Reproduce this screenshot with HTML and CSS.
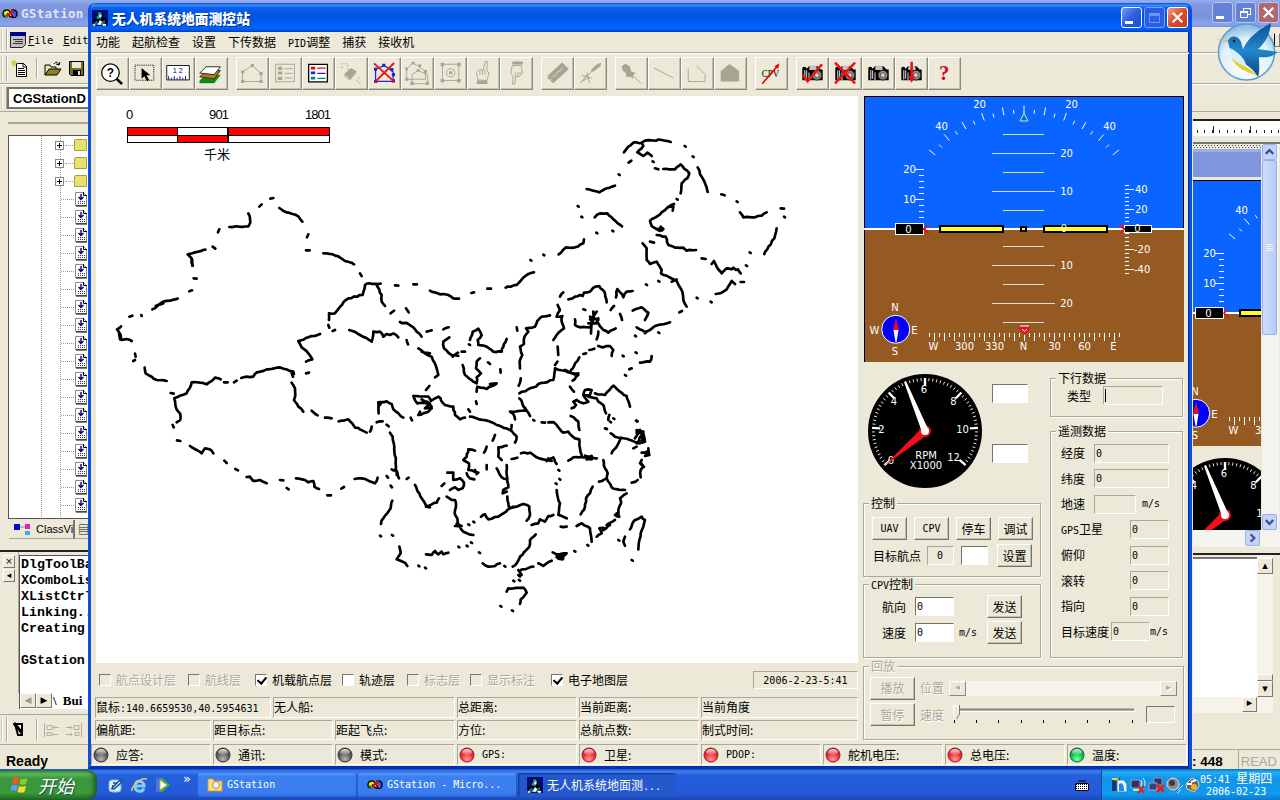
FILE: index.html
```html
<!DOCTYPE html>
<html lang="zh-CN">
<head>
<meta charset="utf-8">
<title>无人机系统地面测控站</title>
<link rel="stylesheet" href="styles.css">
</head>
<body>
<svg width="0" height="0" class="defs">
  <defs>
    <radialGradient id="gGray" cx=".5" cy=".8" r=".8"><stop offset="0" stop-color="#b8b8b8"/><stop offset=".5" stop-color="#666"/><stop offset="1" stop-color="#3c3c3c"/></radialGradient>
    <radialGradient id="gRed" cx=".5" cy=".8" r=".8"><stop offset="0" stop-color="#ff9a9a"/><stop offset=".5" stop-color="#f5333f"/><stop offset="1" stop-color="#a81520"/></radialGradient>
    <radialGradient id="gGreen" cx=".5" cy=".8" r=".8"><stop offset="0" stop-color="#8dff9d"/><stop offset=".5" stop-color="#08cf4d"/><stop offset="1" stop-color="#087a32"/></radialGradient>
    <linearGradient id="gShine" x2="0" y2="1"><stop offset="0" stop-color="#fff" stop-opacity=".85"/><stop offset="1" stop-color="#fff" stop-opacity=".1"/></linearGradient>
    <radialGradient id="gBall" cx=".5" cy=".75" r=".7"><stop offset="0" stop-color="#fff"/><stop offset=".7" stop-color="#dcf0fa"/><stop offset="1" stop-color="#8fbfe2"/></radialGradient>
    <linearGradient id="gWing" x2="0" y2="1"><stop offset="0" stop-color="#0a4f9c"/><stop offset=".5" stop-color="#2487cc"/><stop offset="1" stop-color="#0a4688"/></linearGradient>
  </defs>
  <symbol id="ledGray" viewBox="0 0 16 16"><circle cx="8" cy="8" r="7" fill="url(#gGray)" stroke="#333"/><ellipse cx="8" cy="5" rx="5" ry="3" fill="url(#gShine)"/></symbol>
  <symbol id="ledRed" viewBox="0 0 16 16"><circle cx="8" cy="8" r="7" fill="url(#gRed)" stroke="#8d2026"/><ellipse cx="8" cy="5" rx="5" ry="3" fill="url(#gShine)"/></symbol>
  <symbol id="ledGreen" viewBox="0 0 16 16"><circle cx="8" cy="8" r="7" fill="url(#gGreen)" stroke="#0a6a30"/><ellipse cx="8" cy="5" rx="5" ry="3" fill="url(#gShine)"/></symbol>
  <symbol id="mfc" viewBox="0 0 48 48"><path d="M0 0h48v48H0z" fill="#000d78"/><path d="M16 4h12v10h6v14H12V16h4z" fill="#000"/><path d="M18 7h9l3 9-4 10H15l-2-6 6-4z" fill="#1f9aa0"/><path d="M22 14h6v8h-6z" fill="#e8ffff"/><circle cx="12" cy="36" r="9" fill="#000"/><circle cx="34" cy="35" r="10" fill="#000"/><path d="M2 44c4-7 8-10 14-12l4 12zM22 46l8-12 10-4-2 14z" fill="#156e72"/><path d="M16 44l8-14 6 5-3 9zM32 42h10v5H32zM2 43h8v4H2z" fill="#fff"/></symbol>
  <symbol id="vc" viewBox="0 0 48 36"><path d="M14 6c9-3 12 12 20 20-8 6-12-2-17-8C13 30 3 28 3 18S8 6 14 6z" fill="#f0e800" stroke="#000" stroke-width="4"/><path d="M30 6c10-2 16 4 15 13-1 8-8 11-13 8z" fill="#2060e0" stroke="#000" stroke-width="4"/><path d="M12 27L34 6" stroke="#e01010" stroke-width="7"/><path d="M6 20l9 7" stroke="#12a030" stroke-width="6"/><path d="M29 14l10 12" stroke="#d030c0" stroke-width="5"/></symbol>
  <symbol id="cam" viewBox="0 0 72 54"><path d="M3 9c6-6 12-4 14 3l8-8h28l10 10h7v36H3z" fill="#000"/><path d="M26 6c5-6 19-6 24 0v10H26z" fill="#c8c0b8"/><path d="M11 17v30M17 17v28M25 24v25" stroke="#bbb" stroke-width="4"/><circle cx="51" cy="33" r="16" fill="#948d88" stroke="#222" stroke-width="3"/><circle cx="51" cy="33" r="8" fill="#ddd3d3" stroke="#6b6464" stroke-width="4"/></symbol>
  <symbol id="filei" viewBox="0 0 12 16"><path d="M.5 1.500h8l3 3v10H.5z" fill="#fff" stroke="#888"/><path d="M1 15h11M8.500 1v3.500H12" stroke="#000" fill="none"/><path d="M6 3v5M3.500 6L6 8.500 8.500 6" stroke="#00007a" stroke-width="1.400" fill="none"/><path d="M3 10.500h7M3 12.500h7" stroke="#333" stroke-dasharray="1 1"/></symbol>
</svg>

<div class="ide">
  <div class="ide-title"><svg width="16" height="12"><use href="#vc"/></svg><b>GStation</b>
    <div class="wbtns pale"><span class="wb"><i class="min"></i></span><span class="wb"><i class="rest"></i></span><span class="wb close"><svg viewBox="0 0 20 20"><path d="M5 5l10 10M15 5L5 15"/></svg></span></div>
  </div>
  <div class="ide-menu"><i class="grip"></i><svg width="16" height="16" viewBox="0 0 16 16"><path d="M.5.500h15v12l-3 3H.5z" fill="#c6c3b4" stroke="#223"/><path d="M0 0h16v4H0z" fill="#000090"/><path d="M3 7.500h10M3 11.500h10M5 9.500h8" stroke="#334"/></svg><span><u>F</u>ile</span><span><u>E</u>dit</span><i class="mdi"></i></div>
  <div class="ide-tools"><i class="grip"></i>
    <svg width="18" height="18" viewBox="0 0 18 18"><path d="M5.500 3.500h7l3 3v10h-10z" fill="#fff" stroke="#000"/><path d="M12 3v4h4M7 8.500h6M7 10.500h7M7 12.500h7M7 14.500h7" stroke="#000" fill="none"/><path d="M3 0v7M0 3h7M1 1l4 4M5 1L1 5" stroke="#d0c020"/></svg>
    <i class="sep"></i>
    <svg width="18" height="16" viewBox="0 0 18 16"><path d="M1 14V4h5l1 2h5v3" fill="#efe9a0" stroke="#000"/><path d="M1 14l4-6h12l-4 6z" fill="#8a8420" stroke="#000"/><path d="M10 3c2-3 4-2 5 1m0 0l1-3m-1 3l-3-1" stroke="#000" fill="none"/></svg>
    <svg width="15" height="15" viewBox="0 0 15 15"><path d="M.5.500h14v14H2l-1.500-1.500z" fill="#75701c" stroke="#000"/><path d="M3 1h9v6H3z" fill="#ebe8d8"/><path d="M4 9h8v6H4z" fill="#000"/><path d="M9 10h2v4H9z" fill="#ddd"/></svg>
  </div>
  <div class="ide-combo"><i class="grip"></i><b>CGStationD</b></div>
  <div class="ide-mid">
    <div class="ide-left">
      <div class="tree" id="tree"></div>
      <div class="tabs"><span class="tab"><svg width="18" height="14" viewBox="0 0 18 14"><path d="M0 2h6v6H0z" fill="#0808d0"/><path d="M11 2h5v5h-5z" fill="#e020c0"/><path d="M11 9h5v4h-5z" fill="#20c0d0"/><path d="M6 5h5" stroke="#888"/></svg>ClassVi</span><span class="tab t2">▤</span></div>
      <div class="out">
        <div class="outbar"><i>×</i><i>◂</i></div>
        <pre>DlgToolBa
XComboLis
XListCtrl
Linking..
Creating

GStation</pre>
      </div>
      <div class="outtabs"><i>◀</i><i class="k">▶</i><b>\ Bui</b></div>
      <div class="ide-b2"><i class="grip"></i>
        <svg width="12" height="16" viewBox="0 0 12 16"><path d="M2 2h7v11H5z" fill="#fff" stroke="#000" stroke-width="2"/><path d="M1 1l8 10" stroke="#000" stroke-width="3"/></svg><i class="sep"></i>
        <svg width="38" height="16" viewBox="0 0 38 16"><path d="M.5 1v14M3 3.500h5v4H3zM3 10.500h4v3H3zM9 5.500h6m-4-2l-2 2 2 2M8 12.500h6m-4-2l-2 2 2 2M37.500 1v14M35 3.500h-5v4h5zM35 10.500h-4v3h4zM28 5.500h-6m4-2l2 2-2 2M28 12.500h-6m4-2l2 2-2 2" fill="none" stroke="#b4b09c"/></svg>
      </div>
      <div class="ready">Ready</div>
    </div>
    <div class="ide-right">
      <div class="ruler"></div>
      <div class="docview">
        <svg class="doc" width="68" height="386" viewBox="1193 144 68 386">
          <path d="M1193 144h68v386h-68z" fill="#ece9d8"/><path d="M1193 149h68v28h-68z" fill="#7f97dd"/><path d="M1193 149h68v3h-68z" fill="#99aeea"/>
          <path d="M1193 145.500h68M1194 147.500h67" stroke="#555" stroke-dasharray="1 2"/>
          <use href="#ahi" x="300" y="84"/><use href="#gauge" x="300" y="84"/>
        </svg>
        <div class="vbar"><i class="sb"><svg viewBox="0 0 14 14"><path d="M3 9l4-4 4 4"/></svg></i><i class="thumb"><svg width="7" height="8" viewBox="0 0 7 8"><path d="M0 .5h7M0 2.500h7M0 4.500h7M0 6.500h7" stroke="#eef3ff"/></svg></i><i class="sb end"><svg viewBox="0 0 14 14"><path d="M3 5l4 4 4-4"/></svg></i></div>
      </div>
      <div class="hbar"><i class="sb"><svg viewBox="0 0 14 14"><path d="M5 3l4 4-4 4"/></svg></i></div>
      <div class="rout"><div></div><div class="cbar"><i>▴</i><i class="th"></i><i>▾</i></div></div>
      <div class="rh"><i>▸</i></div>
      <div class="rstat"><b>: 448</b><span>READ</span></div>
    </div>
  </div>
</div>

<svg class="bird" width="66" height="66" viewBox="1214 20 66 66">
  <circle cx="1246.500" cy="52" r="28" fill="url(#gBall)" stroke="#5d9ccc" stroke-width="1.500"/>
  <path d="M1215 39l14 1v2z" fill="#d8c050"/>
  <path d="M1228 41c2-6 10-6 13 1l2 7c6-12 15-19 28-26-1 12-6 20-13 26l20 3c-6 5-12 6-19 5 0 7 1 13-1 20-5-9-12-12-19-17-8-6-10-12-11-19z" fill="url(#gWing)"/>
  <path d="M1230 48c1 12 8 16 17 20-2-9-7-15-17-20z" fill="#d8edf8"/><path d="M1231 56c5 10 19 9 26 20-7-4-21-5-26-20z" fill="#e8cc30"/>
  <circle cx="1234" cy="41" r="1.200" fill="#021"/>
</svg>

<div class="dlg">
  <div class="dlg-title"><svg width="16" height="16"><use href="#mfc"/></svg><b>无人机系统地面测控站</b>
    <div class="wbtns"><span class="wb"><i class="min"></i></span><span class="wb dis"><i class="max"></i></span><span class="wb close"><svg viewBox="0 0 20 20"><path d="M5 5l10 10M15 5L5 15"/></svg></span></div>
  </div>
  <div class="menu"><span>功能</span><span>起航检查</span><span>设置</span><span>下传数据</span><span><i class="l">PID</i>调整</span><span>捕获</span><span>接收机</span></div>
  <div class="toolbar">
    <div class="tg">
      <svg viewBox="0 0 99 99"><circle cx="43" cy="47" r="28" fill="#fff" stroke="#000" stroke-width="4"/><path d="M62 66l18 17" stroke="#000" stroke-width="8"/><text x="31" y="60" font-size="38" font-weight="bold">?</text></svg>
      <svg viewBox="0 0 99 99"><path d="M16 23h60v48H16z" fill="none" stroke="#000" stroke-width="3" stroke-dasharray="3 3"/><path d="M37 32v34l9-8 8 16 7-4-8-15h12z"/></svg>
      <svg viewBox="0 0 99 99"><path d="M12 24h72v46H12z" fill="#fff" stroke="#111" stroke-width="3"/><path d="M18 69V58M27 69v-6M36 69V58M45 69v-6M54 69V58M63 69v-6M72 69V58" stroke="#008" stroke-width="3"/><text x="31" y="49" font-size="23" fill="#008">1 2</text></svg>
      <svg viewBox="0 0 99 99"><path d="M12 72l20-18h46L58 80H12z" fill="#0a8a1a" stroke="#063"/><path d="M12 60l20-20h46L58 67z" fill="#b5761c" stroke="#4a2c00" stroke-width="3"/><path d="M12 48l20-20h46L58 53z" fill="#fff" stroke="#222" stroke-width="3"/></svg>
    </div>
    <div class="tg g">
      <svg viewBox="0 0 99 99"><path d="M18 75V44l31-20 28 26v25z"/><path class="f" d="M13 70h10v10H13zM13 40h10v9H13zM44 19h10v10H44zM72 45h10v10H72zM72 70h10v10H72z"/></svg>
      <svg viewBox="0 0 99 99"><path d="M18 20h60v56H18zM46 34h26M46 49h26M46 64h26"/><path class="f" d="M25 28h14v10H25zM25 43h14v10H25zM25 60h14v10H25z"/></svg>
      <svg viewBox="0 0 99 99" class="c"><path d="M18 20h60v56H18z" fill="#fff" stroke="#000" stroke-width="4"/><path d="M25 28h14v9H25z" fill="#e00"/><path d="M25 43h14v9H25z" fill="#22d"/><path d="M25 60h14v9H25z" fill="#088"/><path d="M46 32h26" stroke="#e00" stroke-width="4"/><path d="M46 49h26" stroke="#22d" stroke-width="4"/><path d="M46 65h26" stroke="#088" stroke-width="4"/></svg>
      <svg viewBox="0 0 99 99"><path class="f" d="M26 52l22-20 18 10-20 26zM18 16h4v4h-4zM30 16h4v4h-4zM18 28h4v4h-4zM36 22h4v4h-4zM70 62h4v4h-4zM66 72h4v4h-4zM74 78h4v4h-4z"/><path d="M26 56l18 14 20-24M36 34l20 12"/></svg>
      <svg viewBox="0 0 99 99" class="c"><path d="M21 75V36l28-12 28 20v31z" fill="none" stroke="#22d" stroke-width="4"/><path d="M16 31h10v10H16zM42 18h10v10H42zM68 32h10v10H68zM73 48h10v10H73zM73 68h10v10H73zM16 70h10v10H16z" fill="#22c"/><path d="M16 17l66 60M80 16L18 78" stroke="#e11" stroke-width="6"/></svg>
      <svg viewBox="0 0 99 99"><path d="M15 68V34l20-18 40 26v26zM32 82V52l20-12 30 14v28z"/><path class="f" d="M10 63h10v10H10zM10 30h9v9h-9zM31 12h9v9h-9zM52 20h9v9h-9zM70 38h10v10H70zM47 35h9v9h-9zM27 76h10v10H27zM76 76h10v10H76z"/></svg>
      <svg viewBox="0 0 99 99"><path d="M24 20h52v52H24z"/><circle cx="50" cy="47" r="13"/><path class="f" d="M18 15h11v11H18zM71 15h11v11H71zM18 67h11v11H18zM71 67h11v11H71zM45 42h10v10H45z"/></svg>
      <svg viewBox="0 0 99 99"><path d="M32 70l-5-23 10-10 12 2 6-28 7 1-2 26 7 10-7 24zM38 41v13M46 41v13M54 39v15"/><path class="f" d="M28 72h34v11H28z"/></svg>
      <svg viewBox="0 0 99 99"><path d="M36 24l-5 24 8 12-2 24 7-1 3-23 13-2 8-10-3-24zM46 60V46M54 57V45M61 52V44"/><path class="f" d="M36 11h34v10H36z"/></svg>
    </div>
    <div class="tg g">
      <svg viewBox="0 0 99 99"><path class="f" d="M16 58l48-44 22 21-50 46-9-8 3-5-9 1-4-5 5-4z"/><path class="hi" d="M30 62l14-8 4-9 10-4 8-10"/></svg>
      <svg viewBox="0 0 99 99"><path d="M16 80l38-38M22 55l32 10M38 46l8 34M28 66l14-16M20 76l26-14" stroke-width="4"/><path class="f" d="M50 38l22-20 12-2-3 10-24 19z"/></svg>
    </div>
    <div class="tg g">
      <svg viewBox="0 0 99 99"><path class="f" d="M18 26l12-8 14 8 4 16 15 6-8 6 0 12-10-6-12 1-1-12-10-8z"/><path d="M56 58l24 24" stroke-width="4"/></svg>
      <svg viewBox="0 0 99 99"><path d="M15 32l62 31" stroke-width="5"/></svg>
      <svg viewBox="0 0 99 99"><path d="M20 34v41h54V53L46 25" stroke-width="3.500"/></svg>
      <svg viewBox="0 0 99 99"><path class="f" d="M18 75V42l28-23 31 22v34z"/></svg>
    </div>
    <div class="tg"><svg viewBox="0 0 99 99"><text class="sf" x="18" y="60" font-size="34" textLength="56" lengthAdjust="spacingAndGlyphs">CPV</text><path d="M20 82l50-58" stroke="#e00" stroke-width="5"/><path d="M74 17l-3 18-12-9z" fill="#e00"/></svg></div>
    <div class="tg">
      <svg viewBox="0 0 99 99"><use href="#cam" x="14" y="22" width="70" height="54"/><path d="M18 54l16 20L80 20" stroke="#e11" stroke-width="8" fill="none"/></svg>
      <svg viewBox="0 0 99 99"><use href="#cam" x="14" y="22" width="70" height="54"/><path d="M16 15l64 66M80 15L16 81" stroke="#e11" stroke-width="8"/></svg>
      <svg viewBox="0 0 99 99"><use href="#cam" x="14" y="22" width="70" height="54"/></svg>
      <svg viewBox="0 0 99 99"><use href="#cam" x="14" y="22" width="70" height="54"/><path d="M50 12v60" stroke="#e11" stroke-width="8"/><path d="M40 58h20L50 80z" fill="#e11"/></svg>
      <svg viewBox="0 0 99 99"><text class="sf" x="32" y="70" font-size="66" font-weight="bold" fill="#d00a14">?</text></svg>
    </div>
  </div>
  <div class="work">
    <div class="lcol">
      <svg class="map" width="762" height="567" viewBox="96 96 762 567">
        <g font-family="Liberation Sans,sans-serif" font-size="13"><text x="126" y="119" textLength="7.500">0</text><text x="209" y="119" textLength="20">901</text><text x="305" y="119" textLength="26">1801</text></g>
        <text x="204" y="159" font-size="13" font-family="Noto Sans CJK SC">千米</text>
        <g shape-rendering="crispEdges"><path d="M127 127h203v16H127z"/><path d="M128 128h49v7h-49zM229 128h100v7H229zM178 136h49v6h-49z" fill="#f00"/><path d="M178 128h49v7h-49zM128 136h49v6h-49zM229 136h100v6H229z" fill="#fff"/></g>
        <g id="map"></g>
      </svg>
      <div class="checks">
        <label class="off"><i></i>航点设计层</label><label class="off"><i></i>航线层</label><label><i class="on"></i>机载航点层</label><label><i class="w"></i>轨迹层</label><label class="off"><i></i>标志层</label><label class="off"><i></i>显示标注</label><label><i class="on"></i>电子地图层</label>
        <span class="clock l">2006-2-23-5:41</span>
      </div>
      <div class="srow r1"><span>鼠标<i class="l">:140.6659530,40.5954631</i></span><span>无人船:</span><span>总距离:</span><span>当前距离:</span><span>当前角度</span></div>
      <div class="srow r2"><span>偏航距:</span><span>距目标点:</span><span>距起飞点:</span><span>方位:</span><span>总航点数:</span><span>制式时间:</span></div>
    </div>
    <div class="rcol">
      <svg class="ahi" width="320" height="266" viewBox="864 96 320 266"><g id="ahi"></g></svg>
      <div class="panels">
        <div class="pl">
          <div class="gaugerow">
            <svg width="116" height="116" viewBox="867 373 116 116"><g id="gauge"></g></svg>
            <div class="boxes"><i class="in"></i><i class="in"></i></div>
          </div>
          <div class="grp ctl"><h6>控制</h6>
            <div class="row"><button class="l">UAV</button><button class="l">CPV</button><button>停车</button><button>调试</button></div>
            <div class="row two"><span>目标航点</span><i class="fld l">0</i><i class="in sm"></i><button>设置</button></div>
          </div>
          <div class="grp cpv"><h6><i class="l">CPV</i>控制</h6>
            <div class="row"><span>航向</span><i class="in l">0</i><em class="l"></em><button>发送</button></div>
            <div class="row"><span>速度</span><i class="in l">0</i><em class="l">m/s</em><button>发送</button></div>
          </div>
        </div>
        <div class="pr">
          <div class="grp down"><h6>下行数据</h6><div class="row"><span>类型</span><i class="fld"><b></b></i></div></div>
          <div class="grp tele"><h6>遥测数据</h6>
            <div class="row"><span>经度</span><i class="fld l wide">0</i></div>
            <div class="row"><span>纬度</span><i class="fld l wide">0</i></div>
            <div class="row gs"><span>地速</span><i class="fld l"></i><em class="l">m/s</em></div>
            <div class="row"><span><i class="l">GPS</i>卫星</span><i class="fld l nar">0</i></div>
            <div class="row"><span>俯仰</span><i class="fld l nar">0</i></div>
            <div class="row"><span>滚转</span><i class="fld l nar">0</i></div>
            <div class="row"><span>指向</span><i class="fld l nar">0</i></div>
            <div class="row ts"><span>目标速度</span><i class="fld l">0</i><em class="l">m/s</em></div>
          </div>
        </div>
      </div>
      <div class="grp play"><h6>回放</h6>
        <div class="row"><button>播放</button><span>位置</span><div class="scroll"><i>◂</i><i>▸</i></div></div>
        <div class="row"><button>暂停</button><span>速度</span>
          <svg width="194" height="26" viewBox="0 0 194 26"><path d="M7 7.500h178" stroke="#888577" stroke-width="2"/><path d="M8 9.500h178" stroke="#fff"/><path d="M4.500 4v9l3 4 2.500-4V4z" fill="#ece9d8" stroke="#fff"/><path d="M10.500 3v9l-3 5" stroke="#777466" fill="none"/><path id="slticks" stroke="#000"/></svg><i class="fld"></i></div>
      </div>
    </div>
  </div>
  <div class="leds">
    <span><svg><use href="#ledGray"/></svg>应答:</span><span><svg><use href="#ledGray"/></svg>通讯:</span><span><svg><use href="#ledGray"/></svg>模式:</span><span><svg><use href="#ledRed"/></svg><i class="l">GPS:</i></span><span><svg><use href="#ledRed"/></svg>卫星:</span><span><svg><use href="#ledRed"/></svg><i class="l">PDOP:</i></span><span><svg><use href="#ledRed"/></svg>舵机电压:</span><span><svg><use href="#ledRed"/></svg>总电压:</span><span><svg><use href="#ledGreen"/></svg>温度:</span>
  </div>
</div>

<div class="task">
  <div class="start"><svg width="20" height="18" viewBox="0 0 20 18"><path d="M3 2c2-1.500 4-1.500 6 0L8 8C6 7 4 7 2 8z" fill="#f2581e"/><path d="M10.500 2.500c2 1 4 1 7-.5L16 8c-2 1-4 1-6.500 0z" fill="#7fd02c"/><path d="M1.500 9.500c2-1 4-1 6 0L6.500 15c-2-1-4-1-6 0z" fill="#5aa0ff"/><path d="M9 10c2 1 4 1 7 0l-1.500 6c-2 1-4 1-7 0z" fill="#ffd52e"/></svg><i>开始</i></div>
  <div class="quick">
    <svg width="16" height="16" viewBox="0 0 16 16"><rect x="1" y="3" width="12" height="12" rx="3" fill="#d9ecfb" stroke="#7db7e8"/><path d="M4 11l8-8 2 2-8 7H4zM5 6h4M4 9h2" stroke="#16508c" fill="none" stroke-width="1.500"/></svg>
    <svg width="17" height="16" viewBox="0 0 17 16"><path d="M13 11.500c-2 4-9 4-9-2.500s9-6 9 0H5" fill="none" stroke="#7cd0ff" stroke-width="3"/><path d="M1 14C0 10 9 0 16 2" fill="none" stroke="#f4c44a" stroke-width="1.500"/></svg>
    <svg width="16" height="16" viewBox="0 0 16 16"><path d="M2 1h5l8 7-8 7H2z" fill="#35b04a"/><path d="M1 1h4v14H1z" fill="#3d7be0"/><path d="M5 3l7 5-7 5z" fill="#fff" stroke="#e8a22c"/></svg>
    <b>»</b>
  </div>
  <div class="tb"><svg width="16" height="16" viewBox="0 0 16 16"><path d="M1 2h5l1 2h8v10H1z" fill="#fbe28a" stroke="#d09a20"/><circle cx="9" cy="8" r="3.500" fill="#e8f4ff" stroke="#c08040"/></svg>GStation</div>
  <div class="tb"><svg width="16" height="12"><use href="#vc"/></svg>GStation - Micro...</div>
  <div class="tb act"><svg width="16" height="16"><use href="#mfc"/></svg><span class="cj">无人机系统地面测<i class="l">...</i></span></div>
  <svg class="kbd" width="14" height="12" viewBox="0 0 14 12"><path d="M0 4h14v8H0z" fill="#fff"/><path d="M1 5.500h12M1 7.500h12M1 9.500h12" stroke="#000" stroke-dasharray="1 1"/><path d="M.5 4.500h13v7H.5zM3 2.500l2-1 2 1 2-1 2 1" fill="none" stroke="#000"/></svg>
  <div class="tray">
    <svg width="90" height="20" viewBox="0 0 90 20"><path d="M1 3h8v13H1z" fill="#123a66"/><path d="M1 3h6l2 3-8-1z" fill="#e8d040"/><path d="M6 5h7l3 4v8H6z" fill="#e8f6ff" stroke="#2a86cc"/><path d="M8 16V9c3-2 5 0 5 7z" fill="#1c8ad8"/>
    <g><path d="M20 5h9v8h-9z" fill="#2c3460" stroke="#9aa4c8"/><path d="M22 15h8" stroke="#8fa" stroke-width="2"/><path d="M30 5q2 3 0 6M32 3q4 5 0 10" stroke="#eee" fill="none"/><path d="M27 11l6 7M33 11l-6 7" stroke="#e0201c" stroke-width="2"/></g>
    <g><path d="M43 3h8v7h-8z" fill="#2c3460" stroke="#8a92b8"/><path d="M38 8h8v7h-8z" fill="#39427a" stroke="#9aa4c8"/><path d="M46 10l7 7M53 10l-7 7" stroke="#e0201c" stroke-width="2.500"/></g>
    <circle cx="62" cy="9" r="6" fill="#8c8c88" stroke="#ddd"/><circle cx="61" cy="8" r="3" fill="#3d3d3d"/><path d="M67 15l5-5M66 18l4-3" stroke="#cfe4ff"/>
    <path d="M75 9l6-6 6 3 1 5-5 6-7-3z" fill="#6a6450" stroke="#ddd8c0"/><path d="M76 9h5M80 7l5-2" stroke="#fff" stroke-width="2"/><circle cx="83" cy="12" r="3" fill="#f0b030"/></svg>
    <div class="time"><div>05:41 <span>星期四</span></div><div>2006-02-23</div></div>
  </div>
</div>
<script src="app.js"></script>
</body>
</html>
```

FILE: styles.css
```css
*{box-sizing:border-box}
body{margin:0;width:1280px;height:800px;overflow:hidden;position:relative;background:#ece9d8;font:12px/14px "Noto Sans CJK SC",sans-serif;color:#000}
i,em{font-style:normal}
.defs{position:absolute}
.l{font-family:"DejaVu Sans Mono",monospace;font-size:10px}
svg{display:block;flex:none}

/* background IDE */
.ide{position:absolute;left:0;top:0;width:1280px;height:770px;display:flex;flex-direction:column;background:#ece9d8}
.ide>div{flex:none}
.ide-title{height:27px;display:flex;align-items:center;gap:5px;padding:0 1px 0 2px;background:linear-gradient(#94aef0,#7f97e0 20%,#7b92dd 60%,#8aa5ec 90%,#7a90d0);color:#dfe6fb;font:bold 13px "DejaVu Sans Mono",monospace}
.ide-title b{font-size:12.5px;letter-spacing:.3px;margin-left:-2px}
.wbtns{margin-left:auto;display:flex;gap:2px}
.wb{width:21px;height:21px;border:1px solid #fff;border-radius:3px;background:linear-gradient(135deg,#7a9cf0,#2a5de0 50%,#1e50d0);display:flex;align-items:center;justify-content:center}
.wb.close{background:linear-gradient(135deg,#f0a08a,#dc4c26 50%,#c83c18)}
.wb svg{width:19px;height:19px}
.wb path{stroke:#fff;stroke-width:2.4;fill:none}
.min{width:8px;height:3px;background:#fff;margin:9px 5px 0 0}
.max{width:11px;height:10px;border:1px solid #6f96f4;border-top-width:3px}
.rest{width:8px;height:7px;border:1px solid #fff;border-top-width:2px;box-shadow:3px -3px 0 -1px #6480d8,3px -3px 0 0 #fff;margin:3px 3px 0 0}
.wb.dis{background:#2a5fe2;border-color:#7ea2f2}
.pale{margin-top:-2px}
.pale .wb{border-color:#b8c6f0;background:#6480d8}
.pale .wb.close{background:#b0686c}
.grip{width:5px;flex:none;align-self:stretch;margin:2px 4px 2px 2px;border-left:1px solid #fff;border-right:1px solid #aca899;box-shadow:1px 0 #fff,-1px 0 #d0cdbd}
.sep{width:2px;height:21px;border-left:1px solid #aca899;border-right:1px solid #fff}
.ide-menu{height:26px;border-bottom:1px solid #aca899;display:flex;align-items:center;gap:10px;font:12px "DejaVu Sans Mono",monospace}
.ide-menu .grip{margin-right:-15px}
.ide-menu svg{margin-left:8px;margin-right:-8px}
.ide-menu span{font-size:10.5px}
.mdi{margin-left:auto;width:6px;height:14px;border:1px solid;border-color:#fff #777 #777 #000}
.ide-tools{height:31px;border-top:1px solid #fff;border-bottom:1px solid #aca899;display:flex;align-items:center;gap:7px}
.ide-tools svg:first-of-type{margin-left:10px}
.ide-tools .grip{margin-right:-13px}
.ide-tools .sep{margin-right:-1px}
.ide-combo{height:28px;border-top:1px solid #fff;border-bottom:1px solid #aca899;display:flex;align-items:center;font:13px "Liberation Sans",sans-serif}
.ide-combo .grip{margin-right:0}
.ide-combo b{width:90px;height:22px;border:2px solid #777466;border-right:0;background:#fff;line-height:19px;padding-left:4px}
.ide .ide-mid{height:658px;display:flex;justify-content:space-between}
.ide-left{width:90px;display:flex;flex-direction:column;padding-top:10px}
.ide-left>div,.ide-right>div{flex-shrink:0}
.tree{height:398px;margin-left:8px;padding-top:14px;border-top:2px double #aca899}
.trbox{border:1px solid #555;border-right:0;background:#fff;height:384px;margin-top:-3px;overflow:hidden;background-image:linear-gradient(#999 50%,#fff 50%),linear-gradient(#999 50%,#fff 50%);background-size:1px 2px;background-repeat:repeat-y;background-position:32px 0,51px 0}
.trow{height:18px;display:flex;align-items:center;justify-content:flex-end;padding-right:3px;gap:1px}
.trow s{width:8px;border-top:1px dotted #999}
.trow u{width:9px;height:9px;border:1px solid #888;background:linear-gradient(#000,#000) 1px 3px/5px 1px no-repeat,linear-gradient(#000,#000) 3px 1px/1px 5px no-repeat,#fff}
.trow em{width:13px;height:12px;background:#e8e070;border:1px solid #a8a030;border-radius:2px 0 0 0}
.trow s:first-child{width:13px}
.trow svg{width:12px;height:16px}
.tabs{display:flex;height:20px;padding-left:9px;font:11px "Liberation Sans",sans-serif}
.tab{width:66px;flex:none;display:flex;align-items:center;gap:4px;border-right:2px solid #777;border-bottom:1px solid #aca899;padding-left:5px;height:19px;white-space:nowrap}
.tab.t2{width:16px;padding-left:3px}
.out{display:flex;height:143px;margin-top:10px;border-top:2px solid #222}
.outbar{width:19px;flex:none;display:flex;flex-direction:column;gap:1px;padding:3px 0 0 3px;border-right:1px solid #aca899}
.outbar i,.outtabs i,.cbar i,.rh i{width:12px;height:13px;border:1px solid;border-color:#fff #777 #777 #fff;font:9px/10px "DejaVu Sans";text-align:center;background:#ece9d8}
.out pre{margin:3px 0 0;width:76px;flex:none;border:1px solid #555;border-right:0;border-bottom:0;background:#fff;padding:1px 0 0 1px;font:bold 13.3px/16px "Liberation Mono",monospace}
.outtabs{display:flex;height:16px;margin-left:19px;border-left:1px solid #555;background:#fff}
.outtabs i{width:16px;flex:none;height:15px;font-size:9px;line-height:13px;color:#999}
.outtabs .k{color:#000}
.outtabs b{flex:1;font:bold 13px/15px "Liberation Serif",serif;padding-left:1px;white-space:pre;word-spacing:3px}
.ide-b2{height:31px;margin-top:5px;border-top:1px solid #aca899;border-bottom:1px solid #aca899;display:flex;align-items:center;gap:7px}
.ide-b2 .grip{margin-right:-1px}
.ide-b2 .sep{margin-left:4px;margin-right:-1px}
.ready{font:bold 14px/22px "Liberation Sans",sans-serif;padding-left:6px;margin-top:5px}
.ide-right{width:88px;padding:7px 0 0 1px;display:flex;flex-direction:column}
.ruler{height:17px;border-top:2px solid #222;background:repeating-linear-gradient(90deg,#222 0 1px,transparent 1px 37px) 20px 5px/100% 7px no-repeat,repeating-linear-gradient(90deg,#222 0 1px,transparent 1px 7.4px) 4px 9px/100% 3px no-repeat,#fff;border-bottom:1px solid #fff;margin-bottom:6px}
.docview{display:flex;height:388px;border-top:2px solid #777}
.vbar{width:17px;background:#f4f3ee;margin-left:1px;display:flex;flex-direction:column}
.sb{display:block;width:15px;height:16px;border-radius:2px;background:#c3d3fb;border:1px solid #9ab0e8}
.sb svg{width:13px;height:14px}
.sb path{fill:none;stroke:#3d5586;stroke-width:2.4}
.thumb{width:15px;height:175px;background:linear-gradient(90deg,#cfdcfd,#b8cbf8);border:1px solid #98b0e8;border-radius:2px;display:flex;align-items:center;justify-content:center}
.end{margin-top:auto}
.hbar{height:17px;background:#f4f3ee;padding-left:52px}
.rout{display:flex;height:144px;margin-top:6px;border-top:2px solid #222;justify-content:space-between;padding-right:7px}
.rout>div:first-child{width:64px;background:#fff;border-top:2px solid #777;margin-top:2px}
.cbar{width:16px;display:flex;flex-direction:column;background:#f5f3ea;padding-top:3px}
.cbar i{width:16px;height:16px;font-size:11px;line-height:13px}
.cbar .th{height:7px;margin-top:auto}
.rh{height:16px;margin-right:7px;padding-left:49px;background:#f5f3ea}
.rh i{display:block;width:15px;height:15px;font-size:11px}
.rstat{height:22px;margin-top:36px;border-top:1px solid #aca899;display:flex;gap:15px;font:14px/24px "Liberation Sans",sans-serif;white-space:nowrap}
.rstat b{font-size:13.5px;margin-left:-1px}
.rstat span{color:#aca899;border-left:1px solid #aca899;padding-left:2px;font-size:13px}
.bird{position:absolute;left:1214px;top:20px}

/* ground-station window */
.dlg{position:absolute;left:88px;top:3px;width:1104px;height:766px;border:3px solid #0a4fe0;border-top:0;border-bottom-color:#0831b0;border-radius:7px 7px 0 0;background:#ece9d8;display:flex;flex-direction:column;overflow:hidden;box-shadow:inset -1px 0 #001ea0}
.dlg-title{height:29px;background:linear-gradient(#0a4fd0,#3a8fff 8%,#0c60ec 16%,#0054e3 45%,#0058f0 65%,#0066ff 85%,#0058e8 94%,#0038b8);color:#fff;display:flex;align-items:center;gap:4px;padding:0 1px 0 1px;font:bold 13.8px "Noto Sans CJK SC",sans-serif;text-shadow:1px 1px #003090}
.menu{height:21px;display:flex;gap:12px;padding-left:5px;line-height:20px;border-bottom:1px solid #aca899;box-shadow:0 1px #fff}
.menu .l{font-size:10px}
.toolbar{height:43px;display:flex;gap:8px;padding:4px 0 0 5px}
.tg{display:flex}
.tg>svg{width:33px;height:33px;border:1px solid;border-color:#fff #8d897a #8d897a #fff;background:#ece9d8;box-shadow:inset -1px -1px #c4c0af}
.tg text{font-family:"Liberation Sans",sans-serif}
.tg text.sf{font-family:"Liberation Serif",serif}
.g>svg:not(.c) path,.g circle{fill:none;stroke:#a9a594;stroke-width:3}
.g>svg:not(.c) path.f{fill:#a9a594;stroke:none}
.g>svg:not(.c) path.hi{stroke:#d8d4c4}
.work{display:flex;gap:6px;padding-left:5px;height:646px}
.lcol{width:762px}
.map{background:#fff}
.checks{height:34px;display:flex;align-items:center;padding-left:3px}
.checks label{display:flex;align-items:center;gap:5px;margin-right:12px}
.checks label:nth-child(2){margin-right:14px}
.checks label:nth-child(3){margin-right:10px}
.checks label:nth-child(5){margin-right:10px}
.checks label:nth-child(6){margin-right:16px}
.checks label i{width:12px;height:12px;border:1px solid;border-color:#777 #fff #fff #777}
.off{color:#aca899;text-shadow:1px 1px #fff}
.checks i.w{background:#fff}
.checks i.on{background:#fff}
.checks i.on::after{content:"";display:block;width:4px;height:7px;margin:0 0 0 3px;border:solid #000;border-width:0 2px 2px 0;transform:rotate(40deg)}
.clock{margin-left:auto;width:105px;height:18px;border:1px solid;border-color:#aca899 #fff #fff #aca899;text-align:center;line-height:17px}
.srow{display:grid;column-gap:2px;margin-left:-1px;height:20px;margin-bottom:3px}
.srow span,.leds span{border:1px solid;border-color:#aca899 #fff #fff #aca899;line-height:17px;white-space:nowrap}
.r1{grid-template-columns:176px 182px 120px 120px 157px}
.r2{grid-template-columns:116px 120px 120px 120px 120px 157px}
.ahi{shape-rendering:crispEdges}
.panels{display:flex;gap:9px;margin-left:-1px;height:295px}
.pl{width:178px}
.pr{width:133px}
.gaugerow{display:flex;height:141px;padding:11px 0 0 4px}
.boxes{display:flex;flex-direction:column;gap:41px;padding:11px 0 0 9px}
.in,.fld{display:block;border:1px solid;border-color:#777466 #fff #fff #777466;background:#fff;height:19px;line-height:18px;padding-left:1px}
.boxes .in{width:36px}
.fld{background:none;border-color:#aca899 #fff #fff #aca899;line-height:17px}
.grp{border:1px solid #aca899;box-shadow:1px 1px #fff,inset 1px 1px #fff}
.grp h6{font:12px/14px "Noto Sans CJK SC",sans-serif;margin:-8px 0 0 5px;padding:0 2px;width:max-content;background:#ece9d8}
.row{display:flex;align-items:center}
button{font:12px/14px "Noto Sans CJK SC",sans-serif;padding:0;width:35px;height:23px;border:1px solid;border-color:#fff #777466 #777466 #fff;background:#ece9d8;box-shadow:inset -1px -1px #c4c0af;color:#000}
button.l{font:10px "DejaVu Sans Mono",monospace}
.ctl{height:74px}
.ctl .row{gap:7px;padding:7px 0 0 8px}
.ctl .two{gap:0;padding:4px 0 0 9px}
.two .fld{width:27px;margin-left:6px;padding-left:9px}
.two .in{width:27px;margin:0 9px 0 7px}
.two button{flex:none}
.cpv{height:74px;margin-top:7px}
.cpv .row{padding:0 0 0 18px;height:27px}
.cpv h6+.row{height:26px;padding-top:1px}
.cpv .in{width:39px;margin-left:9px}
.cpv em{width:33px;padding-left:5px}
.down{height:39px;margin-top:16px}
.down .row{padding:1px 0 0 16px}
.down .fld{width:60px;margin-left:12px;padding:2px 0 0 1px}
.down b{display:block;width:1px;height:13px;background:#000}
.tele{height:227px;margin-top:14px}
.tele .row{height:25.5px;padding:1px 13px 0 10px;justify-content:space-between}
.tele .wide{width:75px}
.tele .nar{width:39px}
.tele h6{margin-bottom:2px}
.tele .row.gs{justify-content:flex-start}
.gs .fld{width:42px;margin:0 6px 0 9px}
.tele .row.ts{justify-content:flex-start;padding-right:0}
.ts .fld{width:39px;margin:0 0 0 2px}
.play{height:74px;margin:9px 0 0 -1px;width:321px;color:#aca899;text-shadow:1px 1px #fff}
.play button{width:45px;color:#aca899;text-shadow:1px 1px #fff}
.play .row{padding:3px 0 0 6px;gap:5px;height:27px}
.play .row+.row{padding-top:2px}
.scroll{width:228px;height:15px;background:#f5f3ec;display:flex;justify-content:space-between}
.scroll i{width:17px;border:1px solid;border-color:#fff #888 #888 #fff;background:#ece9d8;font:9px/11px "DejaVu Sans";text-align:center}
.play .fld{width:29px;height:17px;margin-left:-2px;border-color:#777 #fff #fff #777}
.leds{display:grid;grid-template-columns:120px repeat(8,120px);column-gap:2px;height:21px;margin-top:2px}
.leds span{display:flex;align-items:center;gap:7px;padding-left:1px;height:21px}
.leds svg{width:16px;height:16px}

/* taskbar */
.task{position:absolute;left:0;top:769px;width:1280px;height:31px;display:flex;align-items:center;background:linear-gradient(#1f4fc0,#3a80f0 8%,#2560dc 20%,#2458d8 80%,#1c48b4);color:#fff}
.start{width:97px;height:30px;background:linear-gradient(#3a8a3a,#5cb85c 12%,#3a963c 30%,#389a3a 75%,#226a24);border-radius:0 9px 9px 0;display:flex;align-items:center;gap:8px;padding-left:10px;box-shadow:inset -3px 0 4px #1e5a28}
.start i{font:italic 18px "Noto Sans CJK SC",sans-serif;text-shadow:1px 1px 1px #244}
.quick{width:101px;display:flex;align-items:center;gap:7px;padding-left:11px}
.quick b{font:13px "DejaVu Sans";margin:-12px 0 0 5px}
.tb{width:158px;height:24px;margin-right:2px;border-radius:2px;background:linear-gradient(#5a9aff,#3c80f0 15%,#3a7cee 85%,#2c66d8);display:flex;align-items:center;gap:4px;padding-left:9px;font:10px "DejaVu Sans Mono",monospace;white-space:nowrap}
.act{background:#2558cc;box-shadow:inset 1px 1px 2px #103890}
.cj{font:12px "Noto Sans CJK SC",sans-serif}
.kbd{margin-left:auto;margin-right:12px}
.tray{width:179px;height:31px;background:linear-gradient(#0d6bd0,#1fb0f5 10%,#1193ea 30%,#109af0 80%,#0c78cc);border-left:1px solid #0a4a9c;display:flex;align-items:center;padding-left:9px}
.time{font:10px/12px "DejaVu Sans Mono",monospace;text-align:center;white-space:nowrap;margin-left:-1px}
.time span{font:12px/12px "Noto Sans CJK SC",sans-serif}
```

FILE: app.js
```js
// Border and province segments. Each sheet is drawn at three units per pixel from its own origin.
const sheets = [
 [0,0,"578,797 575,775 563,763 585,757 616,749;638,740 646,746;654,697 658,688;688,681 745,679 751,668 750,655 745,640;778,620 785,613;811,596 820,594;838,624 852,634 875,641 895,649 907,665;921,712 925,703;918,751 929,751;970,760 995,762 1015,769 1035,783 1062,793"],
 [0,260,"577,0 577,17;581,55 590,56;568,94 576,91;457,148 475,136 490,125 510,122 533,116;467,138 490,130;388,170 397,167;424,165 425,168;363,199 351,208 362,225 364,240 380,237 395,243;357,222 360,238;405,281 407,290;400,303 405,300;434,323 437,340 455,350 470,360 500,363;512,399 521,401;523,415 560,400 575,367 600,368 620,373 632,365 645,353 662,358;672,367 683,367;702,367 710,362;724,354 740,350 760,350 770,337 800,328 835,322 860,328 880,335 882,342 875,340 879,350;523,415 527,440 540,460 541,480 530,487;518,495 521,502;531,541 541,543;570,558 590,570 605,580 615,565 633,570 640,580;673,602 680,609;706,627 714,631;740,651 750,650 760,663 780,660 800,670;840,660 850,661;860,684 866,688;888,655 915,660 925,667 940,663 943,680 957,687;982,706 993,706;1024,686 1032,681;1064,657 1085,655 1105,662 1125,670 1133,653;875,368 885,385 886,405 882,420 895,440 910,455;935,452 953,466;975,473 995,475;1016,484 1045,478 1060,495 1065,503 1080,508 1100,518;1110,515 1115,500;1130,487 1148,484;1160,494 1166,499;1170,518 1178,530 1183,560 1188,620 1190,645;1175,628 1190,632 1197,655;1160,648 1164,653;1220,657 1226,653;1172,677 1176,682;1177,722 1172,745 1150,775 1143,792;1245,675 1265,715 1280,740 1290,742;1136,460 1135,427 1160,424 1175,432 1180,448 1210,473;1135,440 1143,430;1232,473 1236,481;960,222 925,232 895,243 905,262 925,280 937,298 918,305;918,340 927,338;1005,210 998,213;985,195 988,203;987,180 987,160 1005,160 1020,140 1045,115 1088,105 1095,75 1100,71 1142,71;1130,75 1145,105 1145,125 1155,138;1172,160 1182,152;1218,145 1226,157;1080,40 1085,48;1185,76 1195,77;1240,73 1251,73;1048,210 1080,225 1115,245 1120,215 1140,215 1150,230 1160,222 1170,225 1180,220 1195,232"],
 [330,240,"210,246 235,252 250,262 260,275 275,290;230,300 234,313;290,275 305,271;340,268 356,262;265,325 285,340 305,350 320,385 325,405 315,412;275,335 300,340;298,438 288,450;300,152 330,163 355,165 370,175 387,176;424,159 432,157;472,146 483,146;527,143 560,135 578,115 595,102 612,97;601,60;640,44;358,292 340,305 342,325 365,345 385,348;368,350 384,338;395,335 405,335;417,313;420,300 428,275 445,266 455,285 443,300 445,315 470,320 490,335 515,335 522,312 530,297;560,262 562,272;398,375 405,405 430,425 440,430;450,355 440,365 438,385 453,400 440,412 440,428;440,455 442,440 470,447 500,430 480,432;474,367 480,372;511,388 512,398;438,484 440,492;415,508 420,515;570,385 570,360 577,345 570,320 582,312 582,295 595,275 588,265 615,260 622,243 635,230 660,226;572,415 566,437;568,460 600,445 618,440 625,432 670,420 675,385 720,398 735,370 748,352;760,342 768,340;778,330 793,326;700,157 690,170;683,195 690,210 680,230 697,228 695,245 702,265 680,285 670,300;683,320 685,345;682,365 675,375;715,178 735,170 750,165 758,168 762,158 780,155 790,143 808,138 823,155 830,187;858,172 862,147 880,172 890,155 908,153;842,210 852,198;870,222 876,240;760,208 766,210;735,238 735,255 750,262 780,262 790,240 790,215;780,230 805,240 800,245 820,270 835,278 857,265;775,250 800,250;783,280 785,240 800,215;780,238 805,235;805,275 800,298;805,318 820,322 840,318 850,330 845,348;705,390 725,400 745,405 728,422;730,400 745,400;908,212 935,202 955,218 945,240;920,262 935,270 950,275 975,258 1020,247;945,280 970,262;915,287;985,277;878,347;917,337;930,368 960,365 965,348;905,385 898,388;885,405;720,440 732,455;740,480 730,485 738,495 725,505;740,480 760,490 775,485 760,465 765,450 785,450 780,465 760,465;775,470 800,475 805,485 820,495 828,520;795,460 825,465 850,437 870,455 890,468 900,500;722,528 745,545 748,570;838,525 835,540;850,535;828,565;918,542;568,475 590,512 600,528;590,512 540,515 550,522 555,538;610,540;635,547 645,548;655,547 672,547 690,568 700,578 715,575 735,595 748,598 750,625 755,645;420,530 460,540 475,543 500,555 515,560 545,573 560,590 555,608;545,555 543,570;250,468 295,470 303,483 325,470 345,495 370,500 375,525 390,538 405,533;250,468 262,490 290,490 305,500 295,515 265,525 270,515;275,478 300,492 285,505 305,505;842,580 855,590 900,600 930,610 940,590 930,570 915,595;920,580 935,575 940,600;870,600 860,620 845,640"],
 [370,400,"375,105 368,122;350,140 342,158;385,142 410,137;385,142 385,170 395,180;315,152 295,148 290,170 280,180 297,190 295,210 325,218;315,210 320,222;290,220 300,235 313,238;350,195 350,208;380,205 395,232 410,237;410,195 412,235 415,262 400,270 398,280 410,275;412,290 418,325;232,218 250,218 250,240 270,235 282,248 278,265 265,270 255,262 240,270;215,258 223,250;425,177 442,173;453,160 480,158 500,172 530,180 550,172 555,185 560,192;520,178 545,183;535,175 530,183;565,210;568,237;557,250;560,270 563,290 570,310 565,345 590,355;595,182 610,172 625,172 660,170 680,175;645,167 665,178 650,178 665,168;168,320 185,313 200,308 207,295;66,405;30,407;88,440 92,460 80,478 105,488 112,498;145,497;165,503;168,463 185,465 195,453 205,463 215,455 220,463 235,458;265,440;290,437;303,427;327,457;230,290 245,300 255,300 258,320 254,340 262,355 265,375 280,395 310,405;255,378 275,378 260,372;295,373;310,365;333,350 345,343 355,358 385,350 400,340 420,325 440,320 460,312 478,320 480,345 470,362;415,328 430,320;485,375 505,370 510,358 525,365 535,348 550,345;572,380 590,380;497,403 480,420 478,440 450,470 440,490 428,500;338,490 355,500 375,498 390,490;403,498;445,510 455,525 445,525 450,530;430,542;447,540;450,512 490,500;505,490 520,498 530,490 545,482;548,457 560,463 590,460 575,472 560,472 580,475;560,468 580,466 578,478 565,476;613,453;652,435;410,575 415,565 430,565 460,563 470,578 452,598 450,612;391,618;426,631;620,378 635,370 660,385 665,425;632,343 645,320 648,295 660,280 668,260;687,245 710,235;700,180 705,205 713,220 710,235 725,262 750,270 765,270;770,280 750,295 753,310 745,330 745,350;735,345 748,350 740,340;735,360 710,375;680,410 695,400 688,385 705,385;700,390 720,375;745,420;765,410 760,425 765,437;780,388 795,360 815,350 825,360 820,380 812,400 805,448;785,480;790,145 800,140;800,90 820,100 825,125 800,130 815,105;800,95 820,95;835,145 838,165 825,168 830,155 815,158;815,180 810,190 822,200 812,210 812,232;812,188 820,200;803,240 785,248;800,62;705,85;720,65"],
 [550,120,"222,97 235,80 250,68 275,68 285,62 335,60 362,66;275,68 280,78 262,97 280,108 292,98 305,108;236,128 244,122;206,163;308,124;315,145 325,148;340,147 375,148 392,133 418,160 412,175 395,190 392,220;380,237;372,252 350,265 330,283 300,302 305,318 325,330;355,262 370,260 368,272;323,327 340,327 332,320 330,333;325,331 337,331 335,323;404,78;428,109;443,142 455,170 465,190 473,216;514,223 524,226;560,244;570,277 580,292 615,292 635,287 650,277;692,265 702,266;702,290;680,325 673,355 655,380 643,402;599,397;588,436;572,486 582,486;110,207 148,217 165,207 195,197;83,258;94,290;134,292 150,280 172,280 190,298 216,319;187,332;139,338;26,403 48,382 75,382 100,370 102,358;320,345 347,350 355,375 375,383 400,383 410,392 438,390;455,415 467,417;485,432 492,423 500,440 515,460 530,445 545,448 550,443 558,450 564,448 572,460;497,522 515,518 530,508 545,483 555,492;440,533;482,545;300,365 312,368;278,370 290,385 290,420 300,432 320,425 335,450 333,460 355,470 380,483 397,515 400,540 410,560;365,485 380,478;388,577 396,573;325,483;288,493"]
];

// Repeatable jitter gives the digitised borders their uneven edge.
let seed = 7;
const jit = () => ((seed = seed * 16807 % 2147483647) / 2147483647 - .5) * 3.6;
const rough = p => {
  const pts = p.trim().split(' ').map(q => q.split(',').map(Number));
  if (pts.length === 1) return `M${pts[0]}l3,2`;
  let d = `M${pts[0]}`;
  for (let i = 1; i < pts.length; i++) {
    const [x0, y0] = pts[i - 1], [x1, y1] = pts[i], n = Math.max(1, Math.round(Math.hypot(x1 - x0, y1 - y0) / 9));
    for (let k = 1; k < n; k++) d += `L${(x0 + (x1 - x0) * k / n + jit()).toFixed(1)} ${(y0 + (y1 - y0) * k / n + jit()).toFixed(1)}`;
    d += `L${x1} ${y1}`;
  }
  return d;
};
document.getElementById('map').innerHTML = sheets.map(([x, y, s]) =>
  `<path transform="translate(${x} ${y}) scale(.33333)" fill="none" stroke="#000" stroke-width="8" stroke-linecap="round" stroke-linejoin="round" d="${s.split(';').map(rough).join('')}"/>`).join('');

const line = (x1, y1, x2, y2, c = '#fff', w = 1) => `<path d="M${x1} ${y1}L${x2} ${y2}" stroke="${c}" stroke-width="${w}" fill="none"/>`;
const txt = (x, y, t, a = 'middle') => `<text x="${x}" y="${y}" text-anchor="${a}" fill="#fff" font-family="DejaVu Sans,sans-serif" font-size="10">${t}</text>`;

// Attitude indicator
let a = '<path d="M864 96h320v133H864z" fill="#0a64ff"/><path d="M864 229h320v133H864z" fill="#955a22"/>' +
  line(864, 96.5, 1184, 96.5, '#000') + line(864.5, 96, 864.5, 362, '#000') + line(1183.5, 96, 1183.5, 229, '#000') + line(864, 229, 1184, 229, '#fff', 2);
for (let d = -50; d <= 50; d += 5) {
  const r = d * Math.PI / 180, r2 = d % 10 ? 120 : 124, s = Math.sin(r), c = Math.cos(r);
  a += '<g shape-rendering="auto">' + line(1024 + 116 * s, 229.5 - 116 * c, 1024 + r2 * s, 229.5 - r2 * c) + '</g>';
}
a += '<path d="M1024 113l-4 8h8z" fill="none" stroke="#b0ff90" shape-rendering="auto"/>';
a += txt(979.5, 108, 20) + txt(1071.5, 108, 20) + txt(941.5, 130, 40) + txt(1109.5, 130, 40);
[134.5, 153.5, 172.5, 191.5, 210.5, 246.5, 265.5, 284.5, 303.5, 322.5].forEach((y, i) => {
  a += i % 2 === (i < 5 ? 1 : 0) ? line(992, y, 1055, y, '#d8dce8') : line(1003, y, 1044, y, '#d8dce8');
});
a += txt(1066.5, 157, 20) + txt(1066.5, 195, 10) + txt(1066.5, 269, 10) + txt(1066.5, 307, 20);
for (let i = 0; i < 9; i++) a += line(i % 5 ? 919 : 915, 169.5 + 6 * i, 924, 169.5 + 6 * i);
a += txt(909.5, 173, 20) + txt(909.5, 203, 10);
for (let y = 185; y <= 273; y += 4) a += line(1125, y + .5, (y - 189) % 20 ? 1129 : 1134, y + .5);
a += txt(1135, 193, 40, 'start') + txt(1135, 213, 20, 'start') + txt(1134, 253, '-20', 'start') + txt(1134, 273, '-40', 'start');
a += '<path d="M939 225h65v8h-65zM1043 225h65v8h-65zM1020 226h7v6h-7z" fill="#000"/><path d="M941 227h61v4h-61zM1045 227h61v4h-61zM1022 228h3v2h-3z" fill="#ff2"/>' + txt(1064, 232, 0);
a += '<path d="M895.5 223.5h28v11h-28zM1124.500 225.500h27v7h-27z" fill="#000" stroke="#fff"/>' + txt(908.5, 233, 0) + txt(1137.5, 232, 0);
a += '<path d="M929 225l-5 4 5 5M1120 225l4 4-4 5" fill="none" stroke="#f01020" stroke-width="1.500"/>';
a += '<g shape-rendering="auto"><circle cx="895.700" cy="329.300" r="14" fill="#00f" stroke="#fff"/><path d="M893 330l3-12 3 12z" fill="#e8101c"/><path d="M893.500 330h5l-2 12h-1z" fill="#fff"/></g>';
a += txt(895, 311, 'N') + txt(895, 355, 'S') + txt(874.5, 334, 'W') + txt(914.5, 334, 'E');
for (let i = 0; i < 39; i++) a += line(929.5 + 5 * i, 333, 929.5 + 5 * i, i % 2 ? 341 : 337);
[[933.5, 'W'], [964.5, 300], [994.5, 330], [1023.5, 'N'], [1054.5, 30], [1084.5, 60], [1113.5, 'E']].forEach(p => a += txt(p[0], 350, p[1]));
a += '<g shape-rendering="auto"><path d="M1019.500 326h10v3l-5 6-5-6z" fill="#e8101c"/><path d="M1020 326h9M1022 329l2.500 2.500 2.500-2.500" stroke="#fff" fill="none"/></g>';
document.getElementById('ahi').innerHTML = a;

// Tachometer
let g = '<circle cx="925" cy="431" r="57" fill="#000"/>';
for (let i = 0; i <= 60; i++) {
  const r = (-130 + i * 260 / 60) * Math.PI / 180, m = i % 10 === 0, s = Math.sin(r), c = Math.cos(r), q = m ? 45 : 50;
  g += line(925 + q * s, 431 - q * c, 925 + 53 * s, 431 - 53 * c, '#fff', m ? 2.4 : .9);
}
[[891, 464, 0], [881.5, 433, 2], [894, 405, 4], [924, 393, 6], [953.5, 405, 8], [962.5, 433, 10], [953.5, 461, 12], [926, 459, 'RPM'], [926, 469, 'X1000']].forEach(p => g += txt(...p));
g += '<circle cx="925" cy="431" r="6" fill="#e8101c"/><path d="M884 466l37-37 6 6z" fill="#f01018"/><path d="M904 382l2-1 22 48-6 3z" fill="#fff"/><circle cx="925" cy="431" r="4" fill="#fff"/>';
document.getElementById('gauge').innerHTML = g;

document.getElementById('slticks').setAttribute('d', Array.from({length: 9}, (_, i) => `M${Math.round(5 + i * 22.2)}.5 18v3`).join(''));

const rows = [];
for (let i = 0; i < 21; i++) rows.push(i < 3
  ? '<div class="trow"><u></u><s></s><em></em></div>'
  : '<div class="trow"><s></s><svg><use href="#filei"/></svg></div>');
document.getElementById('tree').innerHTML = '<div class="trbox">' + rows.join('') + '</div>';
```
